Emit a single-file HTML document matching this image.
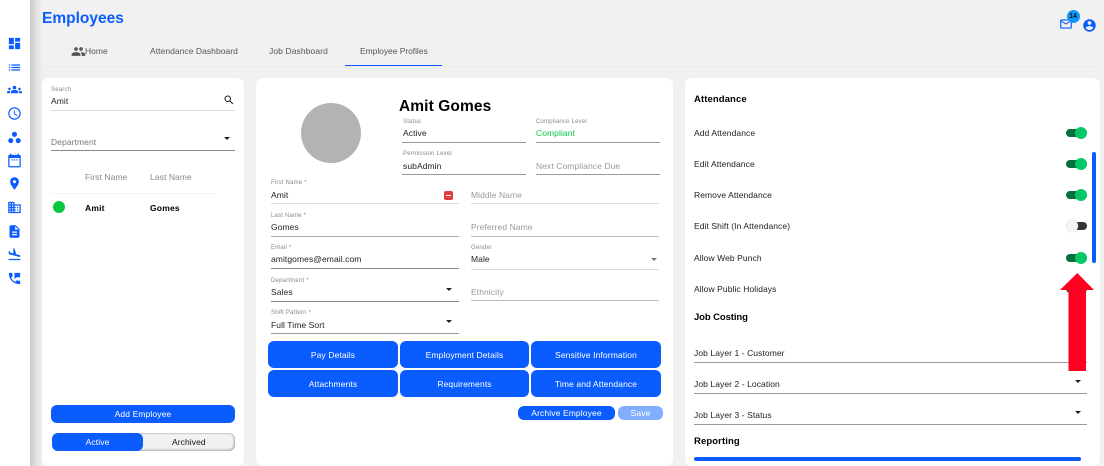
<!DOCTYPE html>
<html><head><meta charset="utf-8"><title>Employees</title>
<style>
html,body{margin:0;padding:0;width:1104px;height:466px;overflow:hidden}
body{position:relative;background:#f1f1f1;font-family:"Liberation Sans",sans-serif;color:#222}
#w{position:absolute;left:0;top:0;width:1104px;height:466px;overflow:hidden;filter:blur(.3px)}
.a{position:absolute}
.t{position:absolute;white-space:nowrap;line-height:12px;font-size:8.5px;letter-spacing:.08px;color:#222}
.l{font-size:6px;letter-spacing:.2px;color:#888}
.g{color:#999}
.b{font-weight:bold;color:#000;letter-spacing:.2px}
.h{font-weight:bold;color:#000;font-size:9.5px;letter-spacing:.1px}
.ln{position:absolute;height:1px;background:#999}
.lt{background:#ddd}
.card{position:absolute;background:#fff;border-radius:7px;top:78px;height:388px}
.btn{position:absolute;background:#0a5cff;color:#fff;border-radius:6px;text-align:center;font-size:8.5px;letter-spacing:.12px;white-space:nowrap}
.c{position:absolute;width:0;height:0;border-left:3px solid transparent;border-right:3px solid transparent;border-top:3px solid #222}
.tr{position:absolute;left:1066px;width:21px;height:8px;border-radius:4px;background:#04703f}
.kn{position:absolute;left:1075px;width:12px;height:12px;border-radius:50%;background:#06c765}
svg.i{position:absolute;fill:#0a5cff}
</style></head><body><div id="w">
<div class="a" style="left:0;top:0;width:30px;height:466px;background:#fff"></div>
<div class="a" style="left:30px;top:0;width:14px;height:466px;background:linear-gradient(90deg,#c8c8c8,#e6e6e6 55%,#f1f1f1)"></div>

<svg class="i" style="left:7px;top:36px" width="15" height="15" viewBox="0 0 24 24"><path d="M3 13h8V3H3v10zm0 8h8v-6H3v6zm10 0h8V11h-8v10zm0-18v6h8V3h-8z"/></svg>
<svg class="i" style="left:7px;top:59.5px" width="15" height="15" viewBox="0 0 24 24"><path d="M3 13h2v-2H3v2zm0 4h2v-2H3v2zm0-8h2V7H3v2zm4 4h14v-2H7v2zm0 4h14v-2H7v2zM7 7v2h14V7H7z"/></svg>
<svg class="i" style="left:7px;top:82px" width="15" height="15" viewBox="0 0 24 24"><path d="M12 12.75c1.63 0 3.07.39 4.24.9 1.08.48 1.76 1.56 1.76 2.73V18H6v-1.61c0-1.18.68-2.26 1.76-2.73 1.17-.52 2.61-.91 4.24-.91zM4 13c1.1 0 2-.9 2-2s-.9-2-2-2-2 .9-2 2 .9 2 2 2zm1.13 1.1c-.37-.06-.74-.1-1.13-.1-.99 0-1.93.21-2.78.58C.48 14.9 0 15.62 0 16.43V18h4.5v-1.61c0-.83.23-1.61.63-2.29zM20 13c1.1 0 2-.9 2-2s-.9-2-2-2-2 .9-2 2 .9 2 2 2zm4 3.43c0-.81-.48-1.53-1.22-1.85-.85-.37-1.79-.58-2.78-.58-.39 0-.76.04-1.13.1.4.68.63 1.46.63 2.29V18H24v-1.57zM12 6c1.66 0 3 1.34 3 3s-1.34 3-3 3-3-1.34-3-3 1.34-3 3-3z"/></svg>
<svg class="i" style="left:6.5px;top:106px" width="15" height="15" viewBox="0 0 24 24"><path d="M11.99 2C6.47 2 2 6.48 2 12s4.47 10 9.99 10C17.52 22 22 17.52 22 12S17.52 2 11.99 2zM12 20c-4.42 0-8-3.58-8-8s3.58-8 8-8 8 3.58 8 8-3.58 8-8 8zm.5-13H11v6l5.25 3.15.75-1.23-4.5-2.67z"/></svg>
<svg class="i" style="left:7px;top:130px" width="15" height="15" viewBox="0 0 24 24"><path d="M6 13c-2.2 0-4 1.8-4 4s1.8 4 4 4 4-1.8 4-4-1.8-4-4-4zm6-10C9.8 3 8 4.8 8 7s1.8 4 4 4 4-1.8 4-4-1.8-4-4-4zm6 10c-2.2 0-4 1.8-4 4s1.8 4 4 4 4-1.8 4-4-1.8-4-4-4z"/></svg>
<svg class="i" style="left:7px;top:153px" width="15" height="15" viewBox="0 0 24 24"><path d="M20 3h-1V1h-2v2H7V1H5v2H4c-1.1 0-2 .9-2 2v16c0 1.1.9 2 2 2h16c1.1 0 2-.9 2-2V5c0-1.1-.9-2-2-2zm0 18H4V8h16v13zM7 10h2v2H7zm4 0h2v2h-2zm4 0h2v2h-2z"/></svg>
<svg class="i" style="left:7px;top:176px" width="15" height="15" viewBox="0 0 24 24"><path d="M12 2C8.13 2 5 5.13 5 9c0 5.25 7 13 7 13s7-7.75 7-13c0-3.87-3.13-7-7-7zm0 9.5c-1.38 0-2.5-1.12-2.5-2.5s1.12-2.5 2.5-2.5 2.5 1.12 2.5 2.5-1.12 2.5-2.5 2.5z"/></svg>
<svg class="i" style="left:7px;top:200px" width="15" height="15" viewBox="0 0 24 24"><path d="M12 7V3H2v18h20V7H12zM6 19H4v-2h2v2zm0-4H4v-2h2v2zm0-4H4V9h2v2zm0-4H4V5h2v2zm4 12H8v-2h2v2zm0-4H8v-2h2v2zm0-4H8V9h2v2zm0-4H8V5h2v2zm10 12h-8v-2h2v-2h-2v-2h2v-2h-2V9h8v10zm-2-8h-2v2h2v-2zm0 4h-2v2h2v-2z"/></svg>
<svg class="i" style="left:7px;top:224px" width="15" height="15" viewBox="0 0 24 24"><path d="M14 2H6c-1.1 0-1.99.9-1.99 2L4 20c0 1.1.89 2 1.99 2H18c1.1 0 2-.9 2-2V8l-6-6zm2 16H8v-2h8v2zm0-4H8v-2h8v2zm-3-5V3.5L18.5 9H13z"/></svg>
<svg class="i" style="left:7px;top:247px" width="15" height="15" viewBox="0 0 24 24"><path d="M2.5 19h19v2h-19zm16.84-3.15c.8.21 1.62-.26 1.84-1.06.21-.8-.26-1.62-1.06-1.84l-5.31-1.42-2.76-9.02L10.12 2v8.28L5.15 8.95l-.93-2.32-1.45-.39v5.17l16.57 4.44z"/></svg>
<svg class="i" style="left:7px;top:270.5px" width="15" height="15" viewBox="0 0 24 24"><path d="M20 15.5c-1.25 0-2.45-.2-3.57-.57-.35-.11-.74-.03-1.02.24l-2.2 2.2c-2.83-1.44-5.15-3.75-6.59-6.59l2.2-2.21c.28-.26.36-.65.25-1C8.7 6.45 8.5 5.25 8.5 4c0-.55-.45-1-1-1H4c-.55 0-1 .45-1 1 0 9.39 7.61 17 17 17 .55 0 1-.45 1-1v-3.5c0-.55-.45-1-1-1zM12 3v10l3-3h6V3h-9z"/></svg>

<div class="t" style="left:42px;top:10px;line-height:17px;font-size:15.5px;font-weight:bold;letter-spacing:0;color:#0a5cff">Employees</div>
<svg class="a" style="left:71px;top:44px;fill:#555" width="15" height="15" viewBox="0 0 24 24"><path d="M16 11c1.66 0 2.99-1.34 2.99-3S17.66 5 16 5c-1.66 0-3 1.34-3 3s1.34 3 3 3zm-8 0c1.66 0 2.99-1.34 2.99-3S9.66 5 8 5C6.34 5 5 6.34 5 8s1.34 3 3 3zm0 2c-2.33 0-7 1.17-7 3.5V19h14v-2.5c0-2.33-4.67-3.5-7-3.5zm8 0c-.29 0-.62.02-.97.05 1.16.84 1.97 1.97 1.97 3.45V19h6v-2.5c0-2.33-4.67-3.5-7-3.5z"/></svg>
<div class="t" style="left:85px;top:45px;color:#555;letter-spacing:0">Home</div>
<div class="t" style="left:150px;top:45px;color:#555;letter-spacing:.05px">Attendance Dashboard</div>
<div class="t" style="left:269px;top:45px;color:#555;letter-spacing:.1px">Job Dashboard</div>
<div class="t" style="left:360px;top:45px;color:#555;letter-spacing:-.05px">Employee Profiles</div>
<div class="a" style="left:42px;top:66px;width:1058px;height:1px;background:#ebebeb"></div>
<div class="a" style="left:345px;top:64.5px;width:97px;height:1.5px;background:#0a5cff"></div>

<svg class="i" style="left:1059px;top:16.5px" width="14" height="14" viewBox="0 0 24 24"><path d="M22 6c0-1.1-.9-2-2-2H4c-1.1 0-2 .9-2 2v12c0 1.1.9 2 2 2h16c1.1 0 2-.9 2-2V6zm-2 0l-8 5-8-5h16zm0 12H4V8l8 5 8-5v10z"/></svg>
<div class="a" style="left:1066.5px;top:9.5px;width:13px;height:13px;border-radius:50%;background:#0a98ff;color:#111;font-size:7px;font-weight:bold;line-height:13px;text-align:center">14</div>
<svg class="i" style="left:1082px;top:18px" width="15" height="15" viewBox="0 0 24 24"><path d="M12 2C6.48 2 2 6.48 2 12s4.48 10 10 10 10-4.48 10-10S17.52 2 12 2zm0 3c1.66 0 3 1.34 3 3s-1.34 3-3 3-3-1.34-3-3 1.34-3 3-3zm0 14.2c-2.5 0-4.71-1.28-6-3.22.03-1.99 4-3.08 6-3.08 1.99 0 5.97 1.09 6 3.08-1.29 1.94-3.5 3.22-6 3.22z"/></svg>

<!-- left card -->
<div class="card" style="left:42px;width:202px"></div>
<div class="t l" style="left:51px;top:84px">Search</div>
<div class="t" style="left:51px;top:95px">Amit</div>
<svg class="a" style="left:223px;top:94px;fill:#222" width="12" height="12" viewBox="0 0 24 24"><path d="M15.5 14h-.79l-.28-.27C15.41 12.59 16 11.11 16 9.5 16 5.91 13.09 3 9.5 3S3 5.91 3 9.5 5.91 16 9.5 16c1.61 0 3.09-.59 4.23-1.57l.27.28v.79l5 4.99L20.49 19l-4.99-5zm-6 0C7.01 14 5 11.99 5 9.5S7.01 5 9.5 5 14 7.01 14 9.5 11.99 14 9.5 14z"/></svg>
<div class="ln lt" style="left:51px;top:110px;width:184px"></div>
<div class="t g" style="left:51px;top:136px;color:#777">Department</div>
<div class="c" style="left:224px;top:137px"></div>
<div class="ln" style="left:51px;top:150px;width:184px;background:#888"></div>
<div class="t g" style="left:85px;top:171px;color:#888">First Name</div>
<div class="t g" style="left:150px;top:171px;color:#888">Last Name</div>
<div class="ln" style="left:51px;top:193px;width:165px;background:#f3f3f3"></div>
<div class="a" style="left:53px;top:201px;width:12px;height:12px;border-radius:50%;background:#0ac73f"></div>
<div class="t b" style="left:85px;top:202px">Amit</div>
<div class="t b" style="left:150px;top:202px">Gomes</div>
<div class="btn" style="left:51px;top:405px;width:184px;height:18px;line-height:18px">Add Employee</div>
<div class="a" style="left:52px;top:433px;width:183px;height:18px;border-radius:6px;background:#f1f1f1;box-shadow:inset -1px -1px 2px #aaa,inset 0 1px 1px #ccc"></div>
<div class="btn" style="left:52px;top:433px;width:91px;height:18px;line-height:18px">Active</div>
<div class="t" style="left:172px;top:436px;color:#111">Archived</div>

<!-- middle card -->
<div class="card" style="left:256px;width:417px"></div>
<div class="a" style="left:301px;top:103px;width:60px;height:60px;border-radius:50%;background:#b3b3b3"></div>
<div class="t" style="left:399px;top:98px;line-height:17px;font-size:15.5px;font-weight:bold;letter-spacing:.1px;color:#000">Amit Gomes</div>
<div class="t l" style="left:403px;top:116px">Status</div>
<div class="t" style="left:403px;top:127px">Active</div>
<div class="ln" style="left:402px;top:142px;width:124px"></div>
<div class="t l" style="left:536px;top:116px">Compliance Level</div>
<div class="t" style="left:536px;top:127px;color:#0ac73f">Compliant</div>
<div class="ln" style="left:536px;top:142px;width:124px"></div>
<div class="t l" style="left:403px;top:148px">Permission Level</div>
<div class="t" style="left:403px;top:160px">subAdmin</div>
<div class="ln" style="left:402px;top:174px;width:124px"></div>
<div class="t g" style="left:536px;top:160px">Next Compliance Due</div>
<div class="ln" style="left:536px;top:174px;width:124px"></div>

<div class="t l" style="left:271px;top:177px">First Name *</div>
<div class="t" style="left:271px;top:189px">Amit</div>
<div class="a" style="left:444px;top:191px;width:9px;height:9px;border-radius:2px;background:#e23b3b"></div>
<div class="a" style="left:446px;top:195px;width:5px;height:1px;background:#fff"></div>
<div class="ln lt" style="left:271px;top:203px;width:188px"></div>
<div class="t g" style="left:471px;top:189px">Middle Name</div>
<div class="ln lt" style="left:471px;top:203px;width:188px"></div>

<div class="t l" style="left:271px;top:210px">Last Name *</div>
<div class="t" style="left:271px;top:221px">Gomes</div>
<div class="ln" style="left:271px;top:236px;width:188px;background:#aaa"></div>
<div class="t g" style="left:471px;top:221px">Preferred Name</div>
<div class="ln" style="left:471px;top:236px;width:188px;background:#bbb"></div>

<div class="t l" style="left:271px;top:242px">Email *</div>
<div class="t" style="left:271px;top:253px">amitgomes@email.com</div>
<div class="ln" style="left:271px;top:268px;width:188px;background:#888"></div>
<div class="t l" style="left:471px;top:242px">Gender</div>
<div class="t" style="left:471px;top:253px">Male</div>
<div class="c" style="left:651px;top:258px;border-top-color:#777"></div>
<div class="ln" style="left:471px;top:269px;width:188px;background:#ddd"></div>

<div class="t l" style="left:271px;top:275px">Department *</div>
<div class="t" style="left:271px;top:286px">Sales</div>
<div class="c" style="left:446px;top:288px"></div>
<div class="ln" style="left:271px;top:301px;width:188px;background:#888"></div>
<div class="t g" style="left:471px;top:286px">Ethnicity</div>
<div class="ln" style="left:471px;top:300px;width:188px;background:#bbb"></div>

<div class="t l" style="left:271px;top:307px">Shift Pattern *</div>
<div class="t" style="left:271px;top:319px">Full Time Sort</div>
<div class="c" style="left:446px;top:320px"></div>
<div class="ln" style="left:271px;top:333px;width:188px;background:#999"></div>

<div class="btn" style="left:268px;top:341px;width:130px;height:27px;line-height:28px">Pay Details</div>
<div class="btn" style="left:400px;top:341px;width:129px;height:27px;line-height:28px">Employment Details</div>
<div class="btn" style="left:531px;top:341px;width:130px;height:27px;line-height:28px">Sensitive Information</div>
<div class="btn" style="left:268px;top:370px;width:130px;height:27px;line-height:28px">Attachments</div>
<div class="btn" style="left:400px;top:370px;width:129px;height:27px;line-height:28px">Requirements</div>
<div class="btn" style="left:531px;top:370px;width:130px;height:27px;line-height:28px">Time and Attendance</div>
<div class="btn" style="left:518px;top:406px;width:97px;height:14px;line-height:14px">Archive Employee</div>
<div class="btn" style="left:618px;top:406px;width:45px;height:14px;line-height:14px;background:#82aeff">Save</div>

<!-- right card -->
<div class="card" style="left:685px;width:415px"></div>
<div class="t h" style="left:694px;top:94px">Attendance</div>
<div class="t" style="left:694px;top:127px">Add Attendance</div>
<div class="t" style="left:694px;top:158px">Edit Attendance</div>
<div class="t" style="left:694px;top:189px">Remove Attendance</div>
<div class="t" style="left:694px;top:220px">Edit Shift (In Attendance)</div>
<div class="t" style="left:694px;top:252px">Allow Web Punch</div>
<div class="t" style="left:694px;top:283px">Allow Public Holidays</div>

<div class="tr" style="top:129px"></div><div class="kn" style="top:127px"></div>
<div class="tr" style="top:160px"></div><div class="kn" style="top:158px"></div>
<div class="tr" style="top:191px"></div><div class="kn" style="top:189px"></div>
<div class="tr" style="top:222px;background:#333"></div><div class="kn" style="top:220px;left:1066px;background:#f5f5f5;box-shadow:0 0 1px #bbb"></div>
<div class="tr" style="top:254px"></div><div class="kn" style="top:252px"></div>
<div class="tr" style="top:285px"></div><div class="kn" style="top:283px"></div>
<div class="a" style="left:1092px;top:152px;width:4px;height:111px;border-radius:2px;background:#0a5cff"></div>

<div class="t h" style="left:694px;top:312px;letter-spacing:-.1px">Job Costing</div>
<div class="t" style="left:694px;top:347px">Job Layer 1 - Customer</div>
<div class="ln" style="left:694px;top:362px;width:393px"></div>
<div class="t" style="left:694px;top:378px">Job Layer 2 - Location</div>
<div class="c" style="left:1075px;top:380px"></div>
<div class="ln" style="left:694px;top:393px;width:393px"></div>
<div class="t" style="left:694px;top:409px">Job Layer 3 - Status</div>
<div class="c" style="left:1075px;top:411px"></div>
<div class="ln" style="left:694px;top:424px;width:393px"></div>
<div class="t h" style="left:694px;top:436px">Reporting</div>
<div class="a" style="left:694px;top:457px;width:387px;height:4px;border-radius:2px;background:#0a5cff"></div>

<svg class="a" style="left:1060px;top:273px" width="35" height="99" viewBox="0 0 35 99"><path d="M17.3 0L34 17H26V98H8.5V17H0z" fill="#ff0020"/></svg>
</div></body></html>
